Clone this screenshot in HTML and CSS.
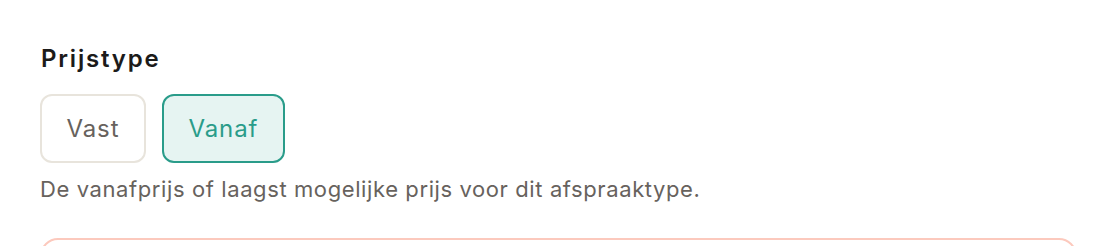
FILE: index.html
```html
<!DOCTYPE html>
<html lang="nl">
<head>
  <meta charset="UTF-8" />
  <title>Prijstype</title>
  <meta name="viewport" content="width=device-width, initial-scale=1.0" />
  <link rel="stylesheet" href="styles.css">
</head>
<body>
  <div class="field">
    <h2 class="field-label">Prijstype</h2>
    <div class="options">
      <button class="option">Vast</button>
      <button class="option active">Vanaf</button>
    </div>
    <p class="hint">De vanafprijs of laagst mogelijke prijs voor dit afspraaktype.</p>
    <div class="notice"></div>
  </div>
</body>
</html>
```

FILE: styles.css
```css
body {
  margin: 0;
  background: #FFFFFF;
  color: #1c1b1a;
  font-family: Inter, 'Noto Sans', sans-serif;
}
.field {
  padding: 43px 41px 0 40px;
}
.field-label {
  margin: 0 0 19px 1px;
  font-size: 24px;
  font-weight: 600;
  line-height: 32px;
  letter-spacing: 1.8px;
}
.options {
  display: flex;
  gap: 16px;
}
.option {
  font-family: inherit;
  font-size: 24px;
  line-height: 28px;
  letter-spacing: 0.9px;
  padding: 19px 24.5px 18px;
  background: #FFFFFF;
  color: #67625d;
  border: 2px solid #e8e4dc;
  border-radius: 12px;
  cursor: pointer;
}
.option.active {
  background: #e6f4f2;
  color: #2a9c8a;
  border-color: #2a9c8a;
}
.hint {
  margin: 12px 0 0;
  font-size: 22px;
  line-height: 28px;
  letter-spacing: 0.6px;
  color: #67625d;
}
.notice {
  margin-top: 35px;
  height: 60px;
  border: 2px solid #fcc9bd;
  border-radius: 18px;
  background: #FFFFFF;
}
```
